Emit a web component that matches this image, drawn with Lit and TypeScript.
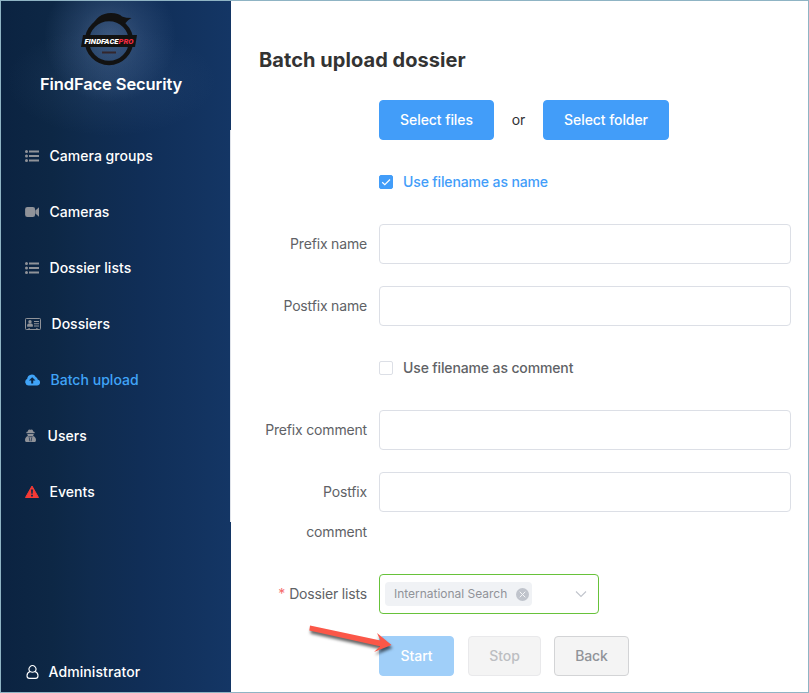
import { LitElement, html, css, svg } from "lit";
import { customElement } from "lit/decorators.js";
import { classMap } from "lit/directives/class-map.js";

const list = svg`
  <g fill="#909399">
    <circle cx="1.500" cy="2.500" r="1.500"/><circle cx="1.500" cy="7" r="1.500"/><circle cx="1.500" cy="11.500" r="1.500"/>
    <path d="M4 1.600h10v1.800H4zM4 6.100h10v1.800H4zM4 10.600h10v1.800H4z"/>
  </g>`;

const camera = svg`
  <path fill="#909399" d="M2.400 2h5.400A2.300 2.300 0 0 1 10.100 4.300v5.400A2.300 2.300 0 0 1 7.800 12H2.400A2.300 2.300 0 0 1 .1 9.700V4.300A2.300 2.300 0 0 1 2.400 2zM14 2.300v9.400L10.400 8.500v-3z"/>`;

const card = svg`
  <rect x=".5" y="1.500" width="15" height="11" rx=".8" fill="none" stroke="#909399"/>
  <g fill="#909399">
    <circle cx="5" cy="4.800" r="1.700"/>
    <path d="M2.200 9.800V8.300Q2.200 6.700 3.700 6.500h2.600Q7.800 6.700 7.800 8.300v1.500z"/>
    <path d="M9 4h5v1H9zM9 6.300h5v1H9zM9 8.600h5v1H9zM3.500 11h1.200v1.500H3.500zM11.300 11h1.200v1.500h-1.200z"/>
  </g>`;

const cloud = svg`
  <path fill="#40a4f8" fill-rule="evenodd" d="M3.600 12.500A3.600 3.600 0 0 1 2.200 5.700 4.600 4.600 0 0 1 10.800 4 3 3 0 0 1 12.700 6.400 3.100 3.100 0 0 1 12 12.500zM7.200 4.200 3.900 7.600H6.200v2.800h2V7.600h2.300z"/>`;

const agent = svg`
  <g fill="#909399">
    <path d="M2.800 2.600Q3.200.3 4.400.5q1.100.6 2.200 0Q7.800.3 8.200 2.600l1.400.5v1.100H1.400V3.100z"/>
    <path d="M2.300 5h6.400Q8.700 6.200 8 6.900 10.800 7.600 11 11q0 2-1.200 2H1.200Q0 13 0 11 .2 7.600 3 6.900 2.300 6.200 2.300 5z"/>
  </g>
  <path fill="none" stroke="#12294a" stroke-width=".7" d="M3.300 7.700h4.400M4.300 8.500l.5 3.800M6.700 8.500l-.5 3.800"/>`;

const warning = svg`
  <path fill="#f53a35" stroke="#f53a35" stroke-width="1" stroke-linejoin="round" d="M7 1 13.500 12.500H.5z"/>
  <path fill="#102b4c" d="M6 4.500h2L7.700 8.800H6.300zM6.100 9.800h1.800v1.700H6.100z"/>`;

const user = svg`
  <path fill="none" stroke="#fff" stroke-width="1.100" d="M4 6.600A3.400 3.600 0 1 1 9 6.600C11.200 7.400 12 8.800 12 10.700 12 12.700 11 13.400 9.500 13.400h-6C2 13.400 1 12.700 1 10.700 1 8.800 1.800 7.400 4 6.600Q6.500 8 9 6.600"/>`;

const items = [
  { label: "Camera groups", icon: list, w: 14 },
  { label: "Cameras", icon: camera, w: 14 },
  { label: "Dossier lists", icon: list, w: 14 },
  { label: "Dossiers", icon: card, w: 16 },
  { label: "Batch upload", icon: cloud, w: 15, active: true },
  { label: "Users", icon: agent, w: 11, wide: true },
  { label: "Events", icon: warning, w: 14 },
];

@customElement("app-sidebar")
export class AppSidebar extends LitElement {
  static styles = css`
    :host {
      display: flex;
      flex-direction: column;
      width: 230px;
      flex: none;
      background:
        radial-gradient(circle 66px at 109px 36px, rgba(130, 155, 195, 0.38), rgba(115, 145, 190, 0.18) 50%, rgba(100, 130, 180, 0) 100%),
        radial-gradient(ellipse 105px 55px at 110px 80px, rgba(100, 135, 180, 0.14), rgba(100, 135, 180, 0) 100%),
        linear-gradient(90deg, #0b2341 0, #0d2745 50px, #0f2b4e 90px, #102e57 140px, #143665 230px);
      color: #fff;
    }
    .brand {
      height: 129px;
      box-sizing: border-box;
      padding-top: 8px;
      display: flex;
      flex-direction: column;
      align-items: center;
    }
    .logo { display: block; margin-right: 14px; }
    .logo-text { font: italic 900 7.500px "Roboto", sans-serif; }
    .title {
      font-size: 16.500px;
      font-weight: 600;
      line-height: 24px;
      margin: 3px 10px 0 0;
      white-space: nowrap;
      letter-spacing: -0.1px;
    }
    .menu { border-right: 1px solid #dfe3ea; }
    .item {
      display: flex;
      align-items: center;
      gap: 10.500px;
      height: 52px;
      padding: 0 0 4px 24px;
      font-size: 14px;
      font-weight: 500;
      letter-spacing: 0.03px;
      white-space: nowrap;
    }
    .name { padding-bottom: 2px; }
    .wide { gap: 11.500px; }
    .active { color: #40a4f8; }
    .icon { flex: none; }
    .admin {
      margin-top: auto;
      height: 40px;
      display: flex;
      align-items: center;
      gap: 10px;
      padding-left: 24.500px;
      font-size: 14px;
      font-weight: 500;
      letter-spacing: 0.1px;
    }
  `;

  render() {
    return html`
      <div class="brand">
        <svg class="logo" width="60" height="60" viewBox="0 0 60 60">
          <circle cx="30" cy="32" r="22" fill="none" stroke="#121212" stroke-width="4.400"/>
          <path fill="#121212" d="M13 18Q18 4 32 4q8 0 11 3.500 4 1.500 9.500 1.500-4 2-6 5l-1 2Q38 9.500 29 11 19 12 13 18z"/>
          <path fill="#121212" d="M4 26H58l-2 12H2z"/>
          <path fill="#33262c" d="M23 42.500h14v2H23z"/>
          <text class="logo-text" x="5.500" y="34.700" fill="#fff" textLength="49" lengthAdjust="spacingAndGlyphs">FINDFACE<tspan fill="#f02b40">PRO</tspan></text>
        </svg>
        <div class="title">FindFace Security</div>
      </div>
      <nav class="menu">
        ${items.map(
          (i) => html`<div class=${classMap({ item: true, active: !!i.active, wide: !!i.wide })}>
            <svg class="icon" width=${i.w} height="14" viewBox="0 0 ${i.w} 14">${i.icon}</svg>
            <span class="name">${i.label}</span>
          </div>`
        )}
      </nav>
      <div class="admin">
        <svg class="icon" width="13" height="14" viewBox="0 0 13 14">${user}</svg>
        <span class="name">Administrator</span>
      </div>
    `;
  }
}

@customElement("app-root")
export class AppRoot extends LitElement {
  static styles = css`
    :host {
      display: flex;
      box-sizing: border-box;
      width: 809px;
      height: 693px;
      border: 1px solid #8fb4c4;
      background: #fff;
      overflow: hidden;
      position: relative;
      font-family: "Inter", "Liberation Sans", sans-serif;
      font-size: 14px;
      color: #303133;
    }
    .main { flex: 1; padding: 45px 17px 0 28px; }
    h1 { margin: 0 0 26px; font-size: 20px; line-height: 28px; font-weight: 700; letter-spacing: 0.06px; white-space: nowrap; color: #333; }
    .row { display: grid; grid-template-columns: 108px 1fr; column-gap: 12px; margin-bottom: 22px; line-height: 40px; }
    .label { text-align: right; color: #606266; white-space: nowrap; letter-spacing: -0.17px; }
    .wrap { white-space: normal; padding-left: 20px; }
    .content { grid-column: 2; display: flex; align-items: center; height: 40px; }
    .wrap + .content { margin-bottom: 40px; }
    .btn {
      box-sizing: border-box;
      height: 40px;
      border: 1px solid #429df9;
      border-radius: 4px;
      background: #429df9;
      color: #fff;
      font: 500 14px/38px "Inter", sans-serif;
      letter-spacing: -0.08px;
      padding: 0;
      text-align: center;
    }
    .files { width: 115px; }
    .folder { width: 126px; }
    .or { width: 49px; text-align: center; }
    .input { box-sizing: border-box; flex: 1; height: 40px; border: 1px solid #dcdfe6; border-radius: 4px; }
    .box { box-sizing: border-box; width: 14px; height: 14px; border: 1px solid #dcdfe6; border-radius: 2px; display: block; }
    .checked { background: #429df9; border-color: #429df9; }
    .check { display: block; }
    .check-label { margin-left: 10px; font-weight: 500; color: #606266; letter-spacing: -0.13px; }
    .on { color: #429df9; }
    .star { color: #f56c6c; margin-right: 4px; }
    .select {
      box-sizing: border-box;
      width: 220px;
      height: 40px;
      border: 1px solid #67c23a;
      border-radius: 4px;
      display: flex;
      align-items: center;
      justify-content: space-between;
      padding: 0 11px 0 5px;
    }
    .tag {
      display: flex;
      align-items: center;
      justify-content: space-between;
      box-sizing: border-box;
      width: 147px;
      height: 24px;
      padding: 0 3.500px 0 9px;
      border-radius: 4px;
      background: #f0f2f5;
      color: #909399;
      font-size: 12px;
      line-height: 24px;
      letter-spacing: -0.02px;
      white-space: nowrap;
    }
    .svg { display: block; flex: none; }
    .start { width: 75px; background: #a0cff9; border-color: #a0cff9; }
    .stop { width: 73px; margin-left: 14px; background: #f4f4f4; border-color: #e9e9eb; color: #bcbec2; }
    .back { width: 75px; margin-left: 13px; background: #f4f4f4; border-color: #d3d4d6; color: #909399; }
    .arrow { position: absolute; left: 299px; top: 615px; filter: drop-shadow(1px 3px 1.500px rgba(0, 0, 0, 0.6)); }
  `;

  private field(label: string, wrap = false) {
    return html`<div class="row">
      <div class=${classMap({ label: true, wrap })}>${label}</div>
      <div class="content"><div class="input"></div></div>
    </div>`;
  }

  render() {
    return html`
      <app-sidebar></app-sidebar>
      <main class="main">
        <h1>Batch upload dossier</h1>
        <div class="row">
          <div class="content">
            <button class="btn files">Select files</button>
            <span class="or">or</span>
            <button class="btn folder">Select folder</button>
          </div>
        </div>
        <div class="row">
          <div class="content">
            <span class="box checked">
              <svg class="check" width="12" height="12" viewBox="0 0 12 12"><path d="M2.200 6.200 4.800 8.700 10 3.500" fill="none" stroke="#fff" stroke-width="1.200"/></svg>
            </span>
            <span class="check-label on">Use filename as name</span>
          </div>
        </div>
        ${this.field("Prefix name")} ${this.field("Postfix name")}
        <div class="row">
          <div class="content">
            <span class="box"></span>
            <span class="check-label">Use filename as comment</span>
          </div>
        </div>
        ${this.field("Prefix comment")}
        ${this.field("Postfix comment", true)}
        <div class="row">
          <div class="label"><span class="star">*</span>Dossier lists</div>
          <div class="content">
            <div class="select">
              <div class="tag">
                <span>International Search</span>
                <svg class="svg" width="13" height="13" viewBox="0 0 13 13">
                  <circle cx="6.500" cy="6.500" r="6.500" fill="#c0c4cc"/>
                  <path d="M3.700 3.700l5.600 5.600M9.300 3.700l-5.600 5.600" stroke="#f5f6f8" stroke-width="1"/>
                </svg>
              </div>
              <svg class="svg" width="12" height="8" viewBox="0 0 12 8"><path d="M1 1.500 6 6.500 11 1.500" fill="none" stroke="#c0c4cc" stroke-width="1.100"/></svg>
            </div>
          </div>
        </div>
        <div class="row">
          <div class="content">
            <button class="btn start">Start</button>
            <button class="btn stop">Stop</button>
            <button class="btn back">Back</button>
          </div>
        </div>
      </main>
      <svg class="arrow" width="100" height="44" viewBox="300 616 100 44">
        <path fill="#fb5748" d="M310 625.500 380.500 640.500 377 633 391.500 645 374 652 380 646.300 309.300 630.500z"/>
      </svg>
    `;
  }
}
